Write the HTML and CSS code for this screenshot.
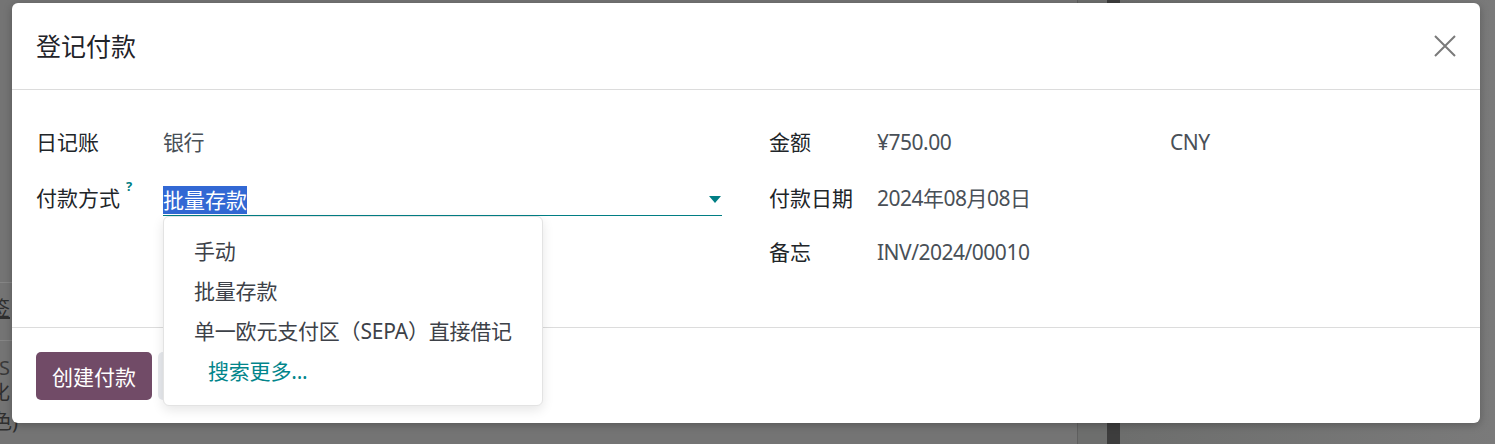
FILE: index.html
```html
<!DOCTYPE html>
<html lang="zh-CN">
<head>
<meta charset="utf-8">
<title>登记付款</title>
<link rel="stylesheet" href="styles.css">
</head>
<body>
<div class="page">
  <div class="page-left">
    <div class="bg-line bg-line-1"></div>
    <div class="bg-text bg-sign">签</div>
    <div class="bg-line bg-line-2"></div>
    <div class="bg-text bg-es">ES</div>
    <div class="bg-text bg-hua">化</div>
    <div class="bg-text bg-se">色)</div>
  </div>
  <div class="page-divider"></div>
  <div class="page-gap"></div>
  <div class="page-bar"></div>
  <div class="page-rest"></div>
</div>

<div class="modal">
  <header class="modal-header">
    <h4 class="modal-title">登记付款</h4>
    <button class="btn-close" aria-label="关闭">
      <svg width="22" height="22" viewBox="0 0 22 22"><path d="M1 1 L21 21 M21 1 L1 21" stroke="#7a7a7a" stroke-width="2" fill="none"/></svg>
    </button>
  </header>
  <div class="modal-body">
    <div class="col col-left">
      <div class="row row-1">
        <div class="label label-left">日记账</div>
        <div class="value">银行</div>
      </div>
      <div class="row row-2">
        <div class="label label-left">付款方式<sup class="help">?</sup></div>
        <div class="field">
          <div class="input"><span class="selected">批量存款</span><span class="caret"></span></div>
          <ul class="dropdown">
            <li class="item">手动</li>
            <li class="item">批量存款</li>
            <li class="item">单一欧元支付区（SEPA）直接借记</li>
            <li class="item item-more">搜索更多...</li>
          </ul>
        </div>
      </div>
    </div>
    <div class="col col-right">
      <div class="row row-1">
        <div class="label label-right">金额</div>
        <div class="value value-amount">¥750.00</div>
        <div class="value">CNY</div>
      </div>
      <div class="row row-2">
        <div class="label label-right">付款日期</div>
        <div class="value">2024年08月08日</div>
      </div>
      <div class="row row-3">
        <div class="label label-right">备忘</div>
        <div class="value">INV/2024/00010</div>
      </div>
    </div>
  </div>
  <footer class="modal-footer">
    <button class="btn btn-primary">创建付款</button>
    <button class="btn btn-secondary">取消</button>
  </footer>
</div>
</body>
</html>
```
FILE: styles.css
```css
* { box-sizing: border-box; }
html, body { margin: 0; padding: 0; }
body {
  width: 1495px;
  height: 444px;
  overflow: hidden;
  font-family: "Noto Sans", "Noto Sans CJK SC", sans-serif;
  background: #727272;
}

/* underlying page (behind backdrop) */
.page {
  display: flex;
  height: 444px;
}
.page-left {
  width: 1077px;
  background: #747474;
  display: flex;
  flex-direction: column;
}
.bg-line { height: 1px; background: #858585; }
.bg-line-1 { margin-top: 282px; }
.bg-line-2 { margin-top: 18px; }
.bg-text {
  color: #2f2f2f;
  font-size: 20px;
  line-height: 25px;
  height: 25px;
  white-space: nowrap;
}
.bg-sign {
  margin-top: 13px;
  margin-left: -10px;
  text-decoration: underline;
  height: 26px;
}
.bg-es { margin-top: 14px; margin-left: -12px; color: #3a3a3a; }
.bg-hua { margin-left: -10px; }
.bg-se { margin-top: 4px; margin-left: -8px; }
.page-divider { width: 1px; background: #5f5f5f; }
.page-gap { width: 29px; background: #6d6e6d; }
.page-bar { width: 13px; background: #3d3d3d; }
.page-rest { flex: 1; background: linear-gradient(90deg, #6d6e6d, #7a7a7a); }

/* modal (overlay) */
.modal {
  position: absolute;
  left: 12px;
  top: 3px;
  width: 1468px;
  height: 420px;
  background: #fff;
  border-radius: 6px;
  box-shadow: 0 2px 8px rgba(0,0,0,0.25);
  display: flex;
  flex-direction: column;
}
.modal-header {
  height: 87px;
  border-bottom: 1px solid #dcdcdc;
  display: flex;
  align-items: center;
  justify-content: space-between;
  padding: 0 24px 0 24px;
}
.modal-title {
  margin: 0;
  font-size: 25px;
  font-weight: 400;
  color: #1f2329;
  line-height: 32px;
}
.btn-close {
  border: 0;
  background: none;
  padding: 0;
  width: 22px;
  height: 22px;
  display: flex;
  cursor: pointer;
}

.modal-body {
  height: 237px;
  padding: 24px 24px 0 24px;
  display: flex;
  align-items: flex-start;
  position: relative;
  z-index: 2;
}
.col { display: flex; flex-direction: column; }
.col-left { width: 686px; }
.col-right { margin-left: 47px; flex: 1; }
.row {
  display: flex;
  align-items: center;
  height: 56px;
  font-size: 21px;
  line-height: 28px;
}
.row-3 { height: 52px; }
.label { color: #212529; flex-shrink: 0; }
.label-left { width: 127px; }
.label-right { width: 108px; }
.value { color: #495057; letter-spacing: -0.5px; }
.value-amount { width: 293px; }
.help {
  color: #017e84;
  font-size: 13px;
  font-weight: 700;
  vertical-align: top;
  position: relative;
  top: -4px;
  margin-left: 6px;
  line-height: 13px;
}

.field {
  position: relative;
  flex: 1;
  margin-top: 2px;
}
.input {
  height: 33px;
  border-bottom: 1px solid #017e84;
  display: flex;
  align-items: center;
  justify-content: space-between;
}
.selected {
  background: #3268d4;
  color: #fff;
  line-height: 28px;
  height: 28px;
  margin-top: 2px;
}
.caret {
  width: 0;
  height: 0;
  border-left: 6px solid transparent;
  border-right: 6px solid transparent;
  border-top: 7px solid #017e84;
  margin-right: 1px;
  margin-top: 2px;
}
.dropdown {
  position: absolute;
  left: 0;
  top: 33px;
  width: 380px;
  margin: 0;
  padding: 14px 0 14px 0;
  list-style: none;
  background: #fff;
  border: 1px solid #e3e3e3;
  border-radius: 6px;
  box-shadow: 0 4px 12px rgba(0,0,0,0.10);
}
.item {
  height: 40px;
  line-height: 40px;
  padding-left: 30px;
  font-size: 21px;
  color: #3d4148;
  white-space: nowrap;
  letter-spacing: -0.2px;
}
.item-more {
  padding-left: 44px;
  color: #01858b;
}

.modal-footer {
  border-top: 1px solid #dcdcdc;
  padding: 24px 24px 23px 24px;
  display: flex;
  gap: 6px;
  position: relative;
  z-index: 1;
}
.btn {
  height: 48px;
  border: 0;
  border-radius: 5px;
  font-family: inherit;
  font-size: 21px;
  padding: 0 16px;
}
.btn-primary {
  width: 116px;
  background: #714b67;
  color: #fff;
}
.btn-secondary {
  background: #e7e9ed;
  color: #1f2329;
}
```
